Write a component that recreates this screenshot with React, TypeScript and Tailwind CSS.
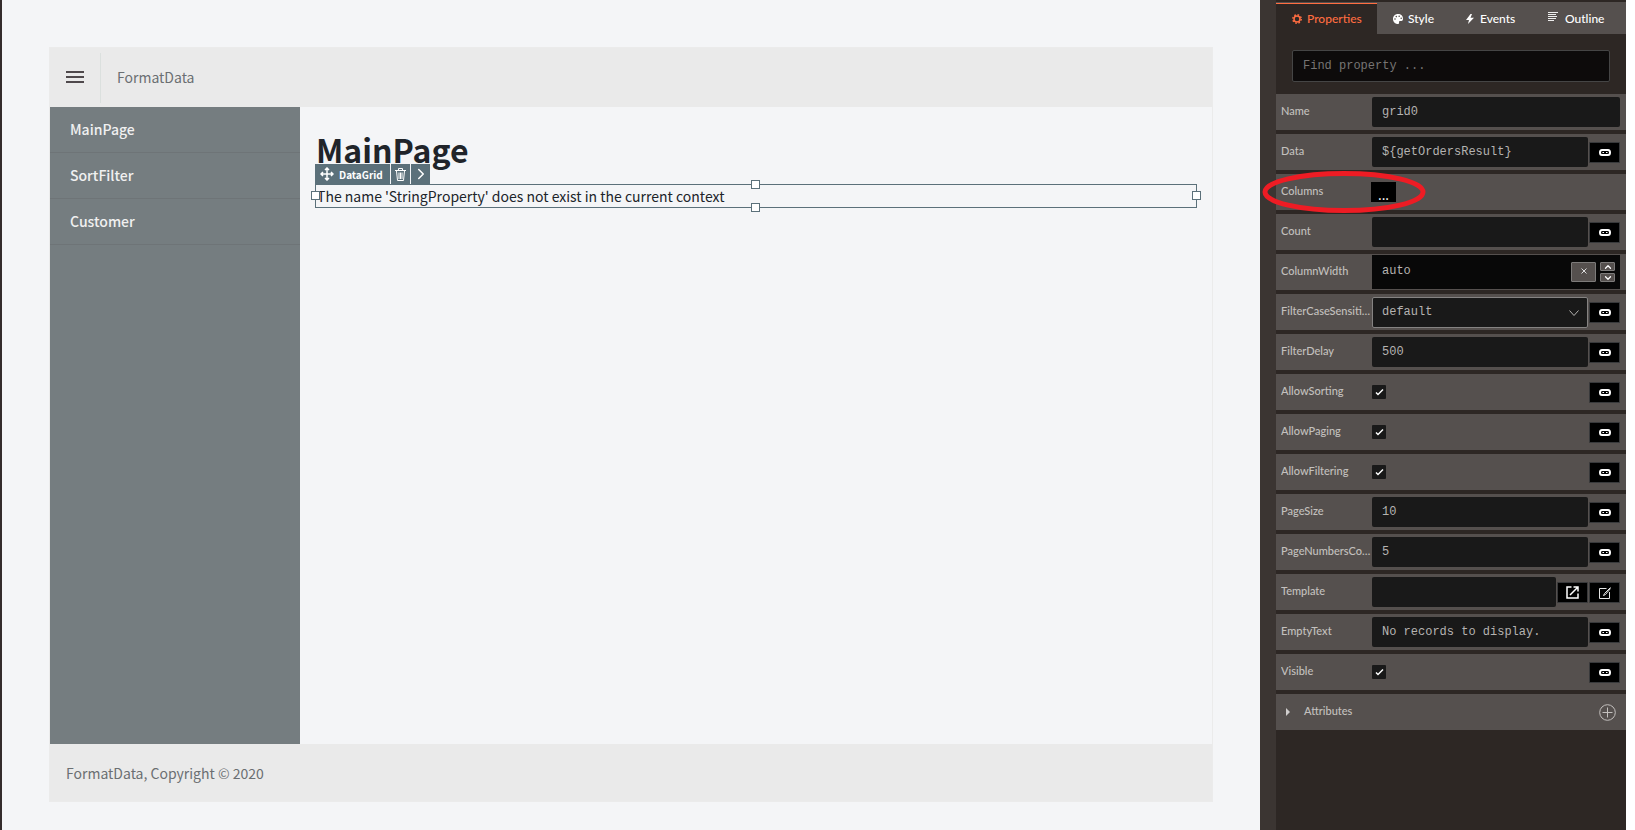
import type { ReactNode } from 'react';
import { ChevronDown, ChevronRight, ChevronUp } from 'lucide-react';

type Kind = 'text' | 'wide' | 'check' | 'columns' | 'width' | 'select' | 'template';

interface Property {
  name: string;
  kind: Kind;
  value?: string;
}

const properties: Property[] = [
  { name: 'Name', kind: 'wide', value: 'grid0' },
  { name: 'Data', kind: 'text', value: '${getOrdersResult}' },
  { name: 'Columns', kind: 'columns' },
  { name: 'Count', kind: 'text', value: '' },
  { name: 'ColumnWidth', kind: 'width', value: 'auto' },
  { name: 'FilterCaseSensitivity', kind: 'select', value: 'default' },
  { name: 'FilterDelay', kind: 'text', value: '500' },
  { name: 'AllowSorting', kind: 'check' },
  { name: 'AllowPaging', kind: 'check' },
  { name: 'AllowFiltering', kind: 'check' },
  { name: 'PageSize', kind: 'text', value: '10' },
  { name: 'PageNumbersCount', kind: 'text', value: '5' },
  { name: 'Template', kind: 'template', value: '' },
  { name: 'EmptyText', kind: 'text', value: 'No records to display.' },
  { name: 'Visible', kind: 'check' },
];

const inputClass =
  'h-[30px] min-w-0 flex-1 rounded-[2px] bg-[#191919] px-[10px] font-["Liberation_Mono",monospace] text-[12px] text-[#b5b3b1] outline-none';

function LinkIcon() {
  return (
    <svg width="12" height="7" viewBox="0 0 12 7" fill="none" stroke="#fff" strokeWidth="2">
      <path d="M5.500 6H3Q1 6 1 3.500Q1 1 3 1H7" />
      <path d="M6.500 1H9Q11 1 11 3.500Q11 6 9 6H5" />
      <path d="M3.500 3.500H5M7 3.500H8.500" strokeWidth="1" />
    </svg>
  );
}

function IconButton({ label, children }: { label: string; children: ReactNode }) {
  return (
    <button
      aria-label={label}
      className="mt-px flex h-[21px] w-[31px] shrink-0 items-center justify-center rounded-[1px] border border-[#38393b] bg-black text-white"
    >
      {children}
    </button>
  );
}

function Editor({ name, kind, value }: Property) {
  const id = `prop-${name}`;

  if (kind === 'wide') {
    return <input id={id} defaultValue={value} className={inputClass} />;
  }

  if (kind === 'columns') {
    return (
      <button
        id={id}
        className="-ml-px flex h-5 w-[25px] items-center justify-center bg-black pt-1 font-['Open_Sans',sans-serif] text-[14px] text-white"
      >
        ...
      </button>
    );
  }

  if (kind === 'check') {
    return (
      <>
        <span className="relative h-[14px] w-[14px]">
          <input
            id={id}
            type="checkbox"
            defaultChecked
            className="peer block h-[14px] w-[14px] appearance-none rounded-[1px] bg-[#191919]"
          />
          <svg
            className="pointer-events-none absolute inset-0 hidden peer-checked:block"
            width="14"
            height="14"
            viewBox="0 0 14 14"
            fill="none"
            stroke="#fff"
            strokeWidth="1.500"
          >
            <path d="M4 7.500L6 9.500L11 4.500" />
          </svg>
        </span>
        <span className="flex-1" />
        <IconButton label={`Bind ${name}`}>
          <LinkIcon />
        </IconButton>
      </>
    );
  }

  if (kind === 'width') {
    return (
      <div className="flex h-[34px] flex-1 items-center bg-[#080808] pr-[5px]">
        <input
          id={id}
          defaultValue={value}
          className="h-[30px] min-w-0 flex-1 bg-[#080808] px-[10px] pb-[2px] font-['Liberation_Mono',monospace] text-[12px] text-[#b5b3b1] outline-none"
        />
        <button
          aria-label="Clear"
          className="mr-1 flex h-5 w-[25px] items-center justify-center rounded-[1px] border border-[#7d7b7a] bg-[#55504e] pb-[2px] text-[#dddddd]"
        >
          <svg width="6" height="6" viewBox="0 0 6 6" stroke="currentColor">
            <path d="M0.500 0.500L5.500 5.500M5.500 0.500L0.500 5.500" />
          </svg>
        </button>
        <div className="flex w-[15px] flex-col gap-[2px]">
          <button
            aria-label="Increase"
            className="flex h-[9px] items-center justify-center rounded-[1px] border border-[#7d7b7a] bg-[#55504e] text-white"
          >
            <ChevronUp size={10} strokeWidth={3} />
          </button>
          <button
            aria-label="Decrease"
            className="flex h-[9px] items-center justify-center rounded-[1px] border border-[#7d7b7a] bg-[#55504e] text-white"
          >
            <ChevronDown size={10} strokeWidth={3} />
          </button>
        </div>
      </div>
    );
  }

  if (kind === 'select') {
    return (
      <>
        <div className="relative mr-px flex-1">
          <select
            id={id}
            defaultValue={value}
            className="block h-[31px] w-full appearance-none rounded-[2px] border border-[#858382] bg-[#191919] px-[9px] pb-px font-['Liberation_Mono',monospace] text-[12px] text-[#b5b3b1] outline-none"
          >
            <option value="default">default</option>
          </select>
          <svg
            className="pointer-events-none absolute top-[13px] right-[9px]"
            width="10"
            height="7"
            viewBox="0 0 10 7"
            fill="none"
            stroke="#b5b3b1"
          >
            <path d="M0.500 0.500L5 5.500L9.500 0.500" />
          </svg>
        </div>
        <IconButton label={`Bind ${name}`}>
          <LinkIcon />
        </IconButton>
      </>
    );
  }

  if (kind === 'template') {
    return (
      <div className="flex flex-1 items-center gap-px">
        <input id={id} defaultValue={value} className={inputClass} />
        <IconButton label="Open template">
          <svg width="13" height="13" viewBox="0 0 13 13" fill="none" stroke="#fff" strokeWidth="1.500">
            <path d="M5.500 1H1V12H12V7.500M7.500 1H12V5.500M12 1L4 9" />
          </svg>
        </IconButton>
        <IconButton label="Edit template">
          <svg width="12" height="12" viewBox="0 0 12 12" fill="none" stroke="#e5e5e5">
            <path d="M7.500 1.500H0.500V11.500H10.500V5" />
            <path d="M11.500 0.500L5.500 6.500L4.500 8.500L6.500 7.500L11.500 1.500" />
          </svg>
        </IconButton>
      </div>
    );
  }

  return (
    <div className="flex flex-1 items-center gap-px">
      <input id={id} defaultValue={value} className={inputClass} />
      <IconButton label={`Bind ${name}`}>
        <LinkIcon />
      </IconButton>
    </div>
  );
}

function PropertyRow(property: Property) {
  return (
    <div className="relative flex h-9 items-center bg-[#55504e] pr-[6px] pl-[5px]">
      <label
        htmlFor={`prop-${property.name}`}
        className="mr-px w-[90px] shrink-0 truncate pb-px text-[11px] font-medium text-[#c3c0be]"
      >
        {property.name}
      </label>
      <Editor {...property} />
      {property.kind === 'columns' && (
        <svg
          className="pointer-events-none absolute -top-1 -left-[14px]"
          width="164"
          height="44"
          viewBox="0 0 164 44"
          fill="none"
        >
          <ellipse cx="82" cy="22" rx="79" ry="18.500" stroke="#ee1c24" strokeWidth="5" />
        </svg>
      )}
    </div>
  );
}

function Tabs() {
  return (
    <div role="tablist" className="flex h-8 bg-[#55504e] pt-px text-[12px] text-white">
      <button
        role="tab"
        aria-selected="true"
        className="flex w-[101px] items-center gap-[5px] border-t border-[#ff6d41] bg-[#2d2724] pl-4 font-medium text-[#ff6d41]"
      >
        <svg width="10" height="10" viewBox="0 0 10 10" fill="none" stroke="currentColor">
          <circle cx="5" cy="5" r="3" strokeWidth="1.500" />
          <circle cx="5" cy="5" r="4.200" strokeWidth="1.500" strokeDasharray="1.650 1.650" />
        </svg>
        Properties
      </button>
      <button role="tab" aria-selected="false" className="flex w-[73px] items-center gap-[5px] pl-4 font-medium">
        <svg width="10" height="10" viewBox="0 0 10 10">
          <path d="M5 0C2 0 0 2.200 0 5S2 10 5 10C6.500 10 6 8.600 6 8S6.500 7 7.500 7H8.500C9.500 7 10 6 10 4.800C10 2 8 0 5 0Z" fill="#fff" />
          <g fill="#55504e">
            <circle cx="2" cy="5" r=".8" />
            <circle cx="3.300" cy="2.600" r=".8" />
            <circle cx="6.200" cy="2.200" r=".8" />
            <circle cx="8.200" cy="4.300" r=".8" />
          </g>
        </svg>
        Style
      </button>
      <button role="tab" aria-selected="false" className="flex w-[82px] items-center gap-[6px] pl-4 font-medium">
        <svg width="8" height="10" viewBox="0 0 8 10" fill="#fff">
          <path d="M4.500 0L0 6H3L2 10L8 3.800H4.500L6 0Z" />
        </svg>
        Events
      </button>
      <button role="tab" aria-selected="false" className="flex flex-1 items-center gap-[7px] pl-4 font-medium">
        <svg width="10" height="9" viewBox="0 0 10 9" className="mb-1" stroke="#fff">
          <path d="M0 .5H10M0 2.500H8M0 4.500H9M0 6.500H8M0 8.500H6" strokeWidth=".9" />
        </svg>
        Outline
      </button>
    </div>
  );
}

function Handle({ className }: { className: string }) {
  return <span className={`absolute h-[9px] w-[9px] border border-[#5b707a] bg-white ${className}`} />;
}

function Designer() {
  return (
    <main className="flex min-w-0 flex-1 flex-col border-l-2 border-[#332c2c] bg-[#f4f5f7] pt-[47px] pr-[47px] pb-7 pl-[47px] font-['Noto_Sans_CJK_SC',sans-serif] text-[14px]">
      <div className="flex flex-1 flex-col border border-[#ebebeb]">
        <header className="flex h-[59px] shrink-0 items-center bg-[#eaeaea] text-[#6b6f72]">
          <button aria-label="Toggle sidebar" className="flex h-[50px] w-[51px] items-center justify-center border-r border-[#dbe0de]">
            <svg width="18" height="12" viewBox="0 0 18 12" fill="#4f494c" className="mb-px">
              <path d="M0 0H18V2H0ZM0 5H18V7H0ZM0 10H18V12H0Z" />
            </svg>
          </button>
          <span className="pl-4">FormatData</span>
        </header>
        <div className="flex flex-1">
          <nav className="w-[250px] shrink-0 bg-[#757d80] font-medium text-[#f0f0f0]">
            {['MainPage', 'SortFilter', 'Customer'].map((page) => (
              <a key={page} href="#" className="flex h-[46px] items-center border-b border-[#6e7477] pl-5">
                {page}
              </a>
            ))}
          </nav>
          <section className="flex-1 pt-4 pr-[15px] pl-[15px] text-[#20242a]">
            <h1 className="pl-px text-[32px] leading-[52px] font-bold">MainPage</h1>
            <div className="relative mt-[9px] flex h-6 items-center border border-[#5b707a] pl-px">
              <p className="leading-[20px]">The name 'StringProperty' does not exist in the current context</p>
              <div className="absolute -top-[21px] -left-px flex h-5 gap-px text-[10px] font-bold text-white">
                <button className="flex w-[75px] items-center gap-[5px] bg-[#5b707a] pl-[5px]">
                  <svg width="14" height="14" viewBox="0 0 14 14" fill="none" stroke="#fff" strokeWidth="1.500">
                    <path d="M7 1V13M1 7H13M5 3L7 1L9 3M5 11L7 13L9 11M3 5L1 7L3 9M11 5L13 7L11 9" />
                  </svg>
                  DataGrid
                </button>
                <button aria-label="Delete" className="flex w-[19px] items-center justify-center bg-[#5b707a]">
                  <svg width="11" height="13" viewBox="0 0 11 13" fill="none" stroke="#fff">
                    <path d="M0 2.500H11M3.500 2V.5H7.500V2M1.500 3L2.500 12.500H8.500L9.500 3M4 4.500V11M5.500 4.500V11M7 4.500V11" />
                  </svg>
                </button>
                <button aria-label="Select parent" className="flex w-[19px] items-center justify-center bg-[#5b707a]">
                  <ChevronRight size={18} strokeWidth={2} />
                </button>
              </div>
              <Handle className="-top-[5px] left-1/2 -ml-[5px]" />
              <Handle className="-bottom-[5px] left-1/2 -ml-[5px]" />
              <Handle className="top-[6px] -left-[5px]" />
              <Handle className="top-[6px] -right-[5px]" />
            </div>
          </section>
        </div>
        <footer className="flex h-[57px] shrink-0 items-center bg-[#eaeaea] pt-px pl-4 text-[#6b6f72]">
          FormatData, Copyright © 2020
        </footer>
      </div>
    </main>
  );
}

export default function App() {
  return (
    <div className="flex min-h-screen bg-white">
      <Designer />
      <aside className="mr-[9px] w-[366px] shrink-0 bg-[#3b3532] pl-4 font-['Lato',sans-serif]">
        <div className="min-h-full bg-[#2d2724] pt-[2px]">
          <Tabs />
          <div className="px-4 pt-4 pb-3">
            <input
              aria-label="Find property"
              placeholder="Find property ..."
              className="block h-8 w-full rounded-[2px] border border-[#454545] bg-[#0d0b0b] px-[10px] font-['Liberation_Mono',monospace] text-[12px] text-[#b5b3b1] outline-none placeholder:text-[#777573]"
            />
          </div>
          <div className="flex flex-col gap-1">
            {properties.map((property) => (
              <PropertyRow key={property.name} {...property} />
            ))}
            <div className="flex h-9 items-center bg-[#55504e] pr-[10px] pl-[10px]">
              <button className="flex flex-1 items-center gap-[14px] pb-px text-[11px] font-medium text-[#c3c0be]">
                <svg width="4" height="8" viewBox="0 0 4 8" fill="#d0cecd">
                  <path d="M0 0L4 4L0 8Z" />
                </svg>
                Attributes
              </button>
              <button aria-label="Add attribute">
                <svg width="17" height="17" viewBox="0 0 17 17" fill="none" stroke="#c3c0be">
                  <circle cx="8.500" cy="8.500" r="7.800" />
                  <path d="M8.500 3.500V13.500M3.500 8.500H13.500" />
                </svg>
              </button>
            </div>
          </div>
        </div>
      </aside>
    </div>
  );
}
